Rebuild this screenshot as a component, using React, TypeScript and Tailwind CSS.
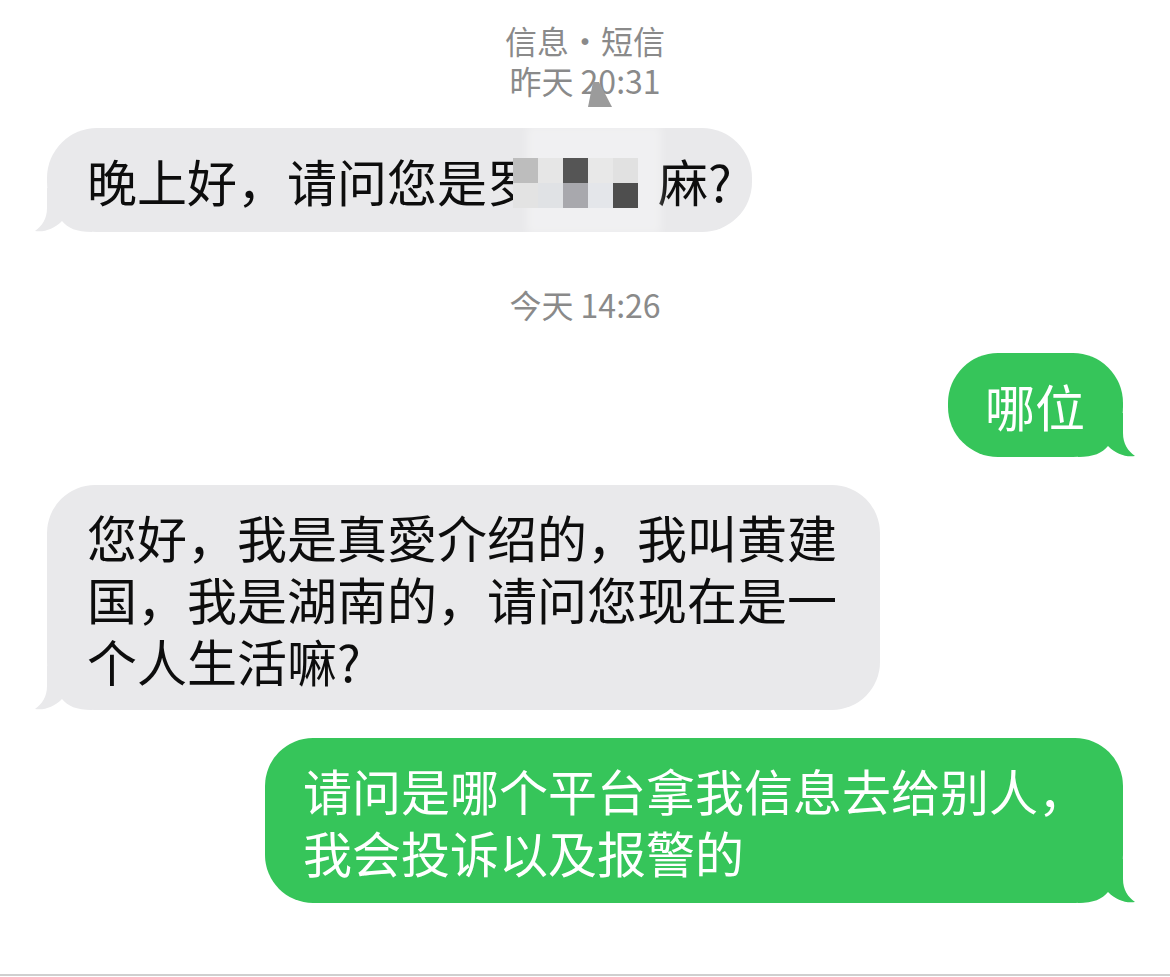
import React from 'react';

const FONT = "font-['Noto_Sans_CJK_SC','Noto_Sans',sans-serif]";

// iOS style bubble tail, drawn for the left side; flipped for outgoing bubbles
function Tail({ side, color }: { side: 'left' | 'right'; color: string }) {
  return (
    <svg
      width="60"
      height="44"
      viewBox="0 0 60 44"
      className={
        side === 'left'
          ? 'absolute left-[-15px] bottom-0'
          : 'absolute right-[-15px] bottom-0 -scale-x-100'
      }
    >
      <path
        d="M15 0 L15 20 C15 31 10 38 3 43 C12 44.5 22 41 30 33 C36 40 44 44 60 44 L60 0 Z"
        fill={color}
      />
    </svg>
  );
}

const mosaic = [
  ['#bdbdbd', '#e6e6e6', '#555555', '#e8e8e8', '#e1e1e1'],
  ['#e3e3e3', '#e0e2e5', '#a8a8ad', '#e4e6ea', '#4e4e4e'],
];

function Stamp({ children }: { children: React.ReactNode }) {
  return <div className="text-[32px] leading-[40px] text-[#8a8a8a]">{children}</div>;
}

export default function App() {
  return (
    <div className={`relative w-[1170px] h-[977px] bg-white flex flex-col overflow-hidden ${FONT}`}>
      {/* header */}
      <div className="mt-[20px] flex flex-col items-center">
        <Stamp>信息・短信</Stamp>
        <Stamp>昨天 20:31</Stamp>
      </div>
      <svg width="26" height="26" viewBox="0 0 26 26" className="absolute left-[587px] top-[82px]">
        <polygon points="6,0 12,0 25,25 1,25" fill="#9b9b9b" />
      </svg>

      {/* incoming */}
      <div className="mt-[28px] pl-[47px]">
        <div className="relative w-[705px] h-[104px] rounded-[50px] bg-[#e9e9eb] pl-[40px] pt-[21px]">
          <Tail side="left" color="#e9e9eb" />
          <p className="relative text-[50px] leading-[62px] text-[#0d0d0d] whitespace-nowrap">
            晚上好，请问您是罗<span className="inline-block w-[121px]" />麻?
          </p>
          <div className="absolute left-[480px] top-[-2px] w-[134px] h-[108px] bg-white/35 blur-[4px]" />
          <div className="absolute left-[466px] top-[30px] grid grid-cols-5">
            {mosaic.flat().map((c, i) => (
              <div key={i} className="w-[25px] h-[25px]" style={{ background: c }} />
            ))}
          </div>
        </div>
      </div>

      <div className="mt-[52px] flex justify-center">
        <Stamp>今天 14:26</Stamp>
      </div>

      {/* outgoing */}
      <div className="mt-[29px] flex justify-end pr-[47px]">
        <div className="relative w-[175px] h-[104px] rounded-[50px] bg-[#36c55a] pl-[37px] pt-[21px]">
          <Tail side="right" color="#36c55a" />
          <p className="relative text-[50px] leading-[62px] text-white whitespace-nowrap">哪位</p>
        </div>
      </div>

      <div className="mt-[28px] pl-[47px]">
        <div className="relative w-[833px] rounded-[48px] bg-[#e9e9eb] pl-[40px] pr-[30px] pt-[20px] pb-[19px]">
          <Tail side="left" color="#e9e9eb" />
          <p className="relative text-[50px] leading-[62px] text-[#0d0d0d]">
            您好，我是真愛介绍的，我叫黄建
            <br />
            国，我是湖南的，请问您现在是一
            <br />
            个人生活嘛?
          </p>
        </div>
      </div>

      <div className="mt-[28px] flex justify-end pr-[47px]">
        <div className="relative w-[858px] rounded-[48px] bg-[#36c55a] pl-[38px] pt-[21px] pb-[20px]">
          <Tail side="right" color="#36c55a" />
          <p className="relative text-[49px] leading-[62px] text-white whitespace-nowrap">
            请问是哪个平台拿我信息去给别人，
            <br />
            我会投诉以及报警的
          </p>
        </div>
      </div>

      <div className="flex-1" />
      <div className="h-[2px] bg-[#cfcfcf] mb-[1px]" />
    </div>
  );
}
